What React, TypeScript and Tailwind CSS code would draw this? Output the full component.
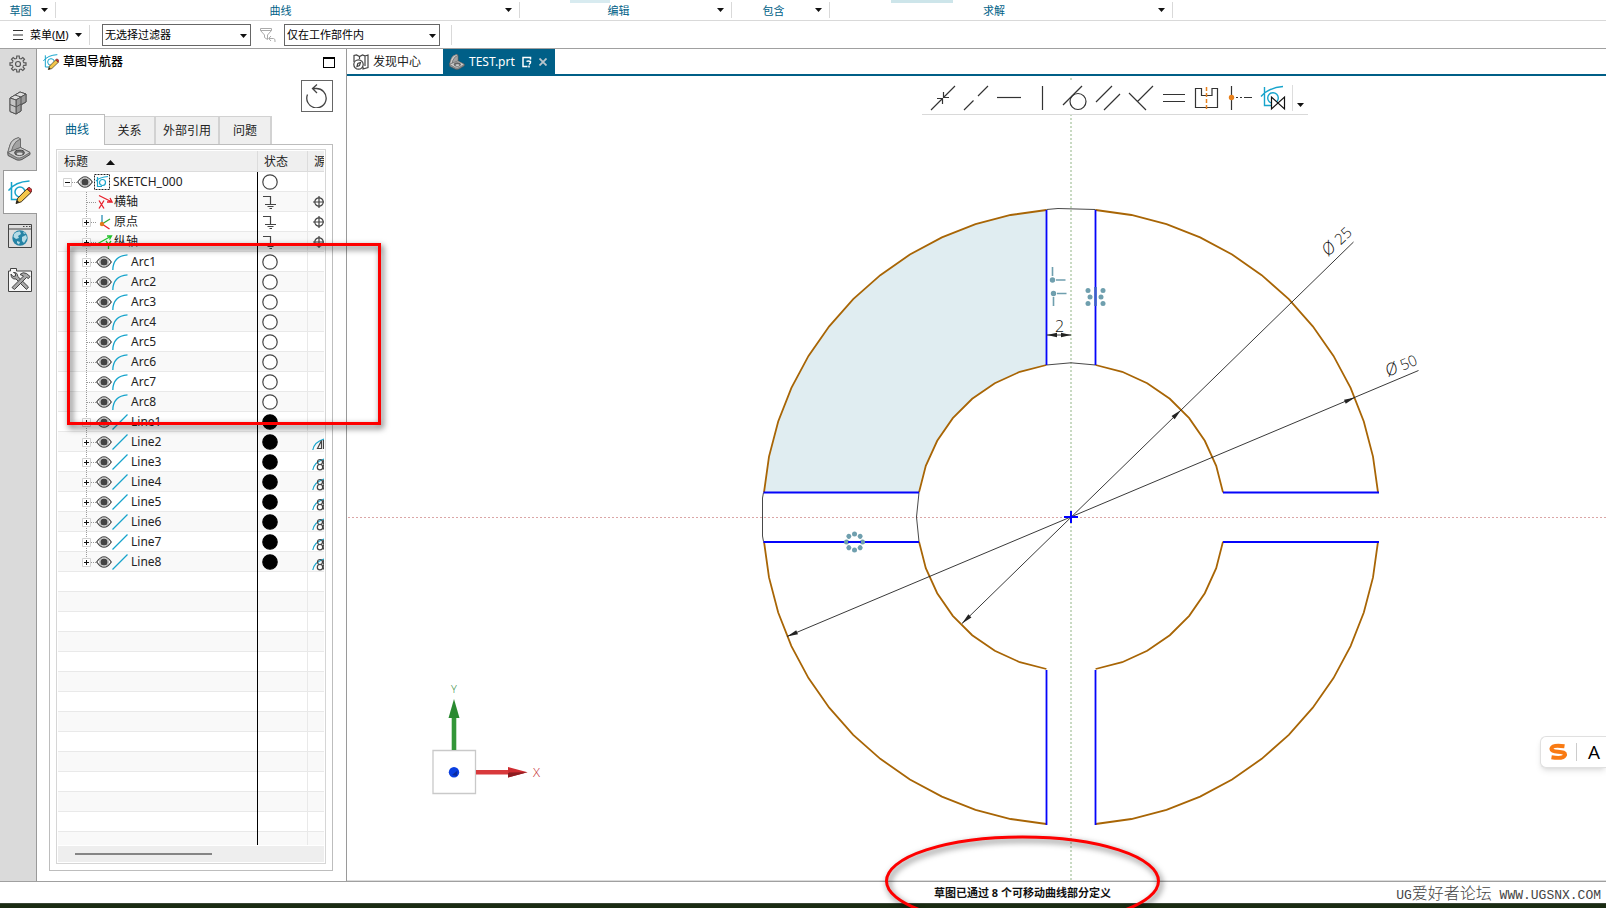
import React from "react";

const SANS = "font-['Noto_Sans','Noto_Sans_CJK_SC',sans-serif]";

/* ---------- small shared pieces ---------- */

function Caret({ className = "" }: { className?: string }) {
  return (
    <svg viewBox="0 0 7 4" className={"h-1 w-[7px] shrink-0 " + className} aria-hidden="true">
      <path d="M0 0H7L3.5 4Z" fill="#111" />
    </svg>
  );
}

function RibbonGroup({ label, className }: { label: string; className: string }) {
  return (
    <div className={"flex h-4 shrink-0 items-center border-r border-[#d9d9d9] pr-[7px] " + className}>
      <span className="flex-1 text-center">{label}</span>
      <button type="button" aria-label={label}>
        <Caret />
      </button>
    </div>
  );
}

function Picker({ value, className }: { value: string; className: string }) {
  return (
    <div className={"relative h-[22px] shrink-0 " + className}>
      <select
        aria-label={value}
        className="h-full w-full appearance-none border border-[#666] bg-white pl-[2px] text-[11px] leading-none text-black outline-none"
      >
        <option>{value}</option>
      </select>
      <Caret className="pointer-events-none absolute top-[10px] right-1" />
    </div>
  );
}

function SketchGlyph({ pencil = false, className = "" }: { pencil?: boolean; className?: string }) {
  return (
    <svg viewBox="0 0 24 24" className={className} fill="none" aria-hidden="true">
      <path d="M3.5 2V19.500H12M.5 10.500C5 4.500 12 1.500 21.500 1" stroke="#17a4cc" strokeWidth="1.500" />
      <circle cx="12" cy="12" r="5" stroke="#17a4cc" strokeWidth="1.500" />
      {pencil && (
        <>
          <path d="M8 23.500L9.700 18.200L19 8.800L23 12.500L13.300 21.800Z" fill="#f4c64a" stroke="#3a2d18" />
          <path d="M19 8.800L20.500 7.500Q22 7 23.500 9.200L23.800 11L23 12.500Z" fill="#d33" stroke="#5a1c1c" strokeWidth=".8" />
          <path d="M8 23.500L9 20L11.400 22.300Z" fill="#222" />
        </>
      )}
    </svg>
  );
}

function PartGlyph({ className = "" }: { className?: string }) {
  return (
    <svg viewBox="0 0 24 24" className={className} aria-hidden="true" strokeLinejoin="round">
      <path d="M.8 15.500L3 8Q5 2 11.500 .8L13.500 2V10.500L23 15.500V17.500L15 22.500Q13 23.500 10 23L1 18.500Z" fill="#9c9c9c" stroke="#555" />
      <path d="M.8 15.500L3 8Q5 2 11.500 .8L13.500 2Q8 4 6 9.500L4.500 14Z" fill="#c9c9c9" stroke="#666" strokeWidth=".7" />
      <path d="M4.500 14L6 9.500Q8 4 13.500 2V10.500Z" fill="#a2a2a2" stroke="#666" strokeWidth=".7" />
      <path d="M.8 15.500L13.500 10.500L23 15.500L15 20.300Q13 21.300 10 20.800Z" fill="#cfcfcf" stroke="#555" strokeWidth=".7" />
      <ellipse cx="12.500" cy="15.700" rx="4.800" ry="2.600" fill="#6d6d6d" stroke="#444" />
      <ellipse cx="12.700" cy="16.700" rx="3" ry="1.200" fill="#d5d5d5" />
    </svg>
  );
}

/* ---------- left resource bar ---------- */

function ResourceBar() {
  const teeth = [0, 45, 90, 135, 180, 225, 270, 315];
  return (
    <nav className="flex w-[37px] shrink-0 flex-col items-end border-r border-[#9a9a9a] bg-[#dadada]">
      <button type="button" aria-label="设置" className="flex h-[30px] w-9 items-center justify-center">
        <svg viewBox="0 0 18 18" className="size-[18px]" fill="none" stroke="#555" strokeWidth="1.200">
          <circle cx="9" cy="9" r="2.500" />
          {teeth.map((a) => (
            <path key={a} d="M6.800 3.600L7.600 3.200L7.800 1H10.200L10.400 3.200L11.200 3.600" transform={`rotate(${a} 9 9)`} />
          ))}
        </svg>
      </button>
      <button type="button" aria-label="装配" className="mt-2 flex h-8 w-9 items-center justify-center">
        <svg viewBox="0 0 18 24" className="h-6 w-[18px]" stroke="#555" strokeLinejoin="round">
          <path d="M1 7L11 1L17 3V11L12 14V20L7 23L1 20.500Z" fill="#aaa" />
          <path d="M1 7L11 1L17 3L7 9Z" fill="#ddd" />
          <path d="M7 9L17 3V11L12 13.500V20L7 23Z" fill="#999" />
          <path d="M1 7L7 9V23L1 20.500Z" fill="#c4c4c4" />
          <path d="M1 13.500L7 16L12 13M6 4L12 6V14" fill="none" />
        </svg>
      </button>
      <button type="button" aria-label="部件" className="mt-[14px] flex h-8 w-[34px] items-center justify-center">
        <PartGlyph className="size-6" />
      </button>
      <div className="mt-[5px] -mr-px flex h-11 w-[34px] items-center justify-center border border-r-0 border-[#9a9a9a] bg-white pr-[2px]">
        <button type="button" aria-label="草图导航器">
          <SketchGlyph pencil className="size-6" />
        </button>
      </div>
      <button type="button" aria-label="浏览器" className="mt-[10px] mr-1">
        <svg viewBox="0 0 24 24" className="size-6">
          <path d="M.5 .5H23.500V23.500H.5Z" fill="#dedede" stroke="#444" />
          <path d="M.5 5H23.500M15 2.500H16.500M18 2.500H19.500M21 2.500H22.500" stroke="#444" />
          <circle cx="12" cy="14" r="7.700" fill="#2583a5" />
          <path d="M6 10Q8 7 12 7.500L13 10L10 12L11 14L8 15L5.500 13ZM14 13L18 11L19 14L16 19L14 17ZM9 17L12 18L11 20.500L9 19ZM15 8L18 9L16 10Z" fill="#b5dbe6" />
        </svg>
      </button>
      <button type="button" aria-label="工具" className="mt-5 mr-1">
        <svg viewBox="0 0 24 24" className="size-6" strokeLinejoin="round">
          <path d="M.5 3H2.500V.5H8.500V3H23.500V23.500H.5Z" fill="#f7f7f7" stroke="#444" />
          <path d="M3 6L5 8.500L7.500 8L7.500 5.500L5.500 4.500Q9.500 4 9.800 8.500L20.500 19L18.500 21.500L8 11Q3 11.500 3 6Z" fill="#a9a9a9" stroke="#444" />
          <path d="M12 6.500Q15 3.500 18.500 5.500L22 8.500L20.500 10.500L18.500 9.500L6.500 21.500L4 19.500L15.500 8Z" fill="#a9a9a9" stroke="#444" />
        </svg>
      </button>
    </nav>
  );
}

/* ---------- navigator tree ---------- */

type Kind = "root" | "x" | "origin" | "y" | "arc" | "line";
type Node = { name: string; kind: Kind; expand?: "-" | "+"; source?: "fixed" | "mirror" | "pattern" };

const NODES: Node[] = [
  { name: "SKETCH_000", kind: "root", expand: "-" },
  { name: "横轴", kind: "x", source: "fixed" },
  { name: "原点", kind: "origin", expand: "+", source: "fixed" },
  { name: "纵轴", kind: "y", expand: "+", source: "fixed" },
  { name: "Arc1", kind: "arc", expand: "+" },
  { name: "Arc2", kind: "arc", expand: "+" },
  { name: "Arc3", kind: "arc" },
  { name: "Arc4", kind: "arc" },
  { name: "Arc5", kind: "arc" },
  { name: "Arc6", kind: "arc" },
  { name: "Arc7", kind: "arc" },
  { name: "Arc8", kind: "arc" },
  { name: "Line1", kind: "line", expand: "+" },
  { name: "Line2", kind: "line", expand: "+", source: "mirror" },
  { name: "Line3", kind: "line", expand: "+", source: "pattern" },
  { name: "Line4", kind: "line", expand: "+", source: "pattern" },
  { name: "Line5", kind: "line", expand: "+", source: "pattern" },
  { name: "Line6", kind: "line", expand: "+", source: "pattern" },
  { name: "Line7", kind: "line", expand: "+", source: "pattern" },
  { name: "Line8", kind: "line", expand: "+", source: "pattern" },
];
const BLANK_ROWS = 14;

function Eye() {
  return (
    <svg viewBox="0 0 16 12" className="h-3 w-4 shrink-0" fill="none">
      <path d="M.7 6Q8-4.500 15.300 6Q8 16.500 .7 6Z" fill="#fff" stroke="#444" strokeWidth="1.200" />
      <circle cx="8" cy="6" r="3.600" fill="#444" />
      <circle cx="8" cy="6" r="4.500" stroke="#777" strokeWidth=".5" />
    </svg>
  );
}

function Branch({ node, last }: { node: Node; last: boolean }) {
  const root = node.kind === "root";
  return (
    <svg viewBox="0 0 16 20" className="h-5 w-4 shrink-0" fill="none">
      {!root && <path d={last ? "M6.500 0V10" : "M6.500 0V20"} stroke="#999" strokeDasharray="1 1" />}
      <path d="M7 10.500H16" stroke="#999" strokeDasharray="1 1" />
      {node.expand && (
        <>
          <path d="M2.500 6.500H10.500V14.500H2.500Z" fill="#fff" stroke="#d2d2d2" />
          <path d={node.expand === "+" ? "M4 10.500H9M6.500 8V13" : "M4 10.500H9"} stroke="#111" />
        </>
      )}
    </svg>
  );
}

function KindIcon({ kind }: { kind: Kind }) {
  switch (kind) {
    case "root":
      return (
        <svg viewBox="0 0 16 16" className="size-4 shrink-0" fill="none">
          <path d="M.5 .5H15.500V15.500H.5Z" stroke="#222" strokeDasharray="2 1" />
          <path d="M3.500 3V12.500H8M2 7Q6 3 14 2.500" stroke="#17a4cc" strokeWidth="1.200" />
          <circle cx="8.500" cy="8.500" r="3" stroke="#17a4cc" strokeWidth="1.200" />
        </svg>
      );
    case "x":
      return (
        <svg viewBox="0 0 16 16" className="size-4 shrink-0" fill="none" stroke="#e8202c">
          <path d="M2 1.500L15 8M10 8L15 8L13 4" strokeWidth="1.300" />
          <path d="M2 6.500L7 14.500M7 6.500L2 14.500" strokeWidth="1.300" />
        </svg>
      );
    case "origin":
      return (
        <svg viewBox="0 0 16 16" className="size-4 shrink-0" fill="none" strokeWidth="1.300">
          <path d="M5 10V1" stroke="#2a8fb5" />
          <path d="M5 10L13 5" stroke="#35a835" />
          <path d="M5 10L12.500 15" stroke="#e8202c" />
          <circle cx="5" cy="10" r="2.200" fill="#e07b1d" />
        </svg>
      );
    case "y":
      return (
        <svg viewBox="0 0 16 16" className="size-4 shrink-0" fill="none" stroke="#22c32a" strokeWidth="1.300">
          <path d="M1 9.500L14.500 2M10 2L14.500 2L12.500 5.500" />
          <path d="M9 7L11.500 10.500L14 7M11.500 10.500V15" />
        </svg>
      );
    case "arc":
      return (
        <svg viewBox="0 0 16 16" className="size-4 shrink-0" fill="none">
          <path d="M.8 16Q1 2 15.500 .8" stroke="#17a4cc" strokeWidth="1.300" />
        </svg>
      );
    case "line":
      return (
        <svg viewBox="0 0 16 16" className="size-4 shrink-0" fill="none">
          <path d="M.5 15.500L15.500 .5" stroke="#17a4cc" strokeWidth="1.300" />
        </svg>
      );
  }
}

function StateIcon({ kind }: { kind: Kind }) {
  const fixed = kind === "x" || kind === "y" || kind === "origin";
  return (
    <svg viewBox="0 0 16 16" className="size-4" fill="none">
      {fixed ? (
        <path d="M1 2.500H8.500V10M3 10.500H14M5.500 12.500H11.500M7.500 14.500H10" stroke="#444" strokeWidth="1.200" />
      ) : (
        <circle cx="8" cy="8" r="7.200" fill={kind === "line" ? "#000" : "#fff"} stroke={kind === "line" ? "#000" : "#444"} strokeWidth="1.200" />
      )}
    </svg>
  );
}

function SourceIcon({ source }: { source: NonNullable<Node["source"]> }) {
  if (source === "fixed")
    return (
      <svg viewBox="0 0 11 14" className="ml-[5px] h-[14px] w-[11px]" fill="none" stroke="#444" strokeWidth="1.200">
        <circle cx="6" cy="7" r="4.200" />
        <path d="M0 7H11M6 1V13" />
      </svg>
    );
  return (
    <svg viewBox="0 0 12 14" className="mt-1 ml-1 h-[14px] w-3" fill="none">
      <path d="M.8 13Q2 5 12 2" stroke="#17a4cc" strokeWidth="1.200" />
      {source === "mirror" ? (
        <path d="M5.500 11.500L9.500 3.500V11.500ZM11.500 3V12" stroke="#444" strokeWidth="1.200" />
      ) : (
        <>
          <circle cx="8" cy="5" r="2.500" stroke="#444" strokeWidth="1.200" />
          <circle cx="8" cy="10.200" r="2.700" stroke="#444" strokeWidth="1.200" />
          <path d="M12 3Q10.500 5 12 7.500Q10.300 10 12 12.500" stroke="#444" strokeWidth="1.200" />
        </>
      )}
    </svg>
  );
}

function TreeRow({ node, index }: { node?: Node; index: number }) {
  const line = "border-b border-[#e9e9e9] p-0";
  const axis = node && (node.kind === "x" || node.kind === "y" || node.kind === "origin");
  return (
    <tr className={index % 2 ? "h-5 bg-[#f9f9f9]" : "h-5 bg-white"}>
      <td className={line}>
        {node && (
          <div className={node.kind === "root" ? "flex h-[19px] items-center pl-[3px]" : "flex h-[19px] items-center pl-[22px]"}>
            <Branch node={node} last={index === NODES.length - 1} />
            {!axis && <Eye />}
            <span className={axis ? "ml-px flex" : node.kind === "root" ? "ml-px flex" : "flex"}>
              <KindIcon kind={node.kind} />
            </span>
            <span className={axis ? "ml-px" : "ml-[3px]"}>{node.name}</span>
          </div>
        )}
      </td>
      <td className="bg-black p-0" />
      <td className={line + " border-r border-r-[#e9e9e9] pl-1"}>
        {node && <StateIcon kind={node.kind} />}
      </td>
      <td className={line + " overflow-hidden"}>{node?.source && <SourceIcon source={node.source} />}</td>
    </tr>
  );
}

function Navigator() {
  const rows: (Node | undefined)[] = [...NODES, ...Array(BLANK_ROWS).fill(undefined)];
  const tab = "h-7 border-t border-r-2 border-[#d2d2d2] bg-[#efefef] text-center";
  return (
    <aside className="flex w-[310px] shrink-0 flex-col border-r border-[#9a9a9a] bg-white pr-[13px] pb-[10px] pl-3 text-xs leading-none text-[#222]">
      <header className="-mx-2 flex h-[26px] shrink-0 items-center pl-[2px]">
        <SketchGlyph pencil className="size-4" />
        <h2 className="ml-1 flex-1 font-medium text-black">草图导航器</h2>
        <button type="button" aria-label="最大化" className="mr-[6px] h-[11px] w-3 border border-t-2 border-black" />
      </header>
      <button
        type="button"
        aria-label="重置"
        className="mt-[5px] flex size-8 shrink-0 items-center justify-center self-end border border-[#666]"
      >
        <svg viewBox="0 0 24 24" className="size-6" fill="none" stroke="#444" strokeWidth="1.300">
          <path d="M2.500 10.500A9.700 9.700 0 1 0 11 4.500H7.500M12 .5L7.500 4.500L12 9" />
        </svg>
      </button>
      <div className="mt-[2px] flex shrink-0 items-end" role="tablist">
        <button type="button" role="tab" aria-selected="true" className="relative z-10 -mb-px h-[31px] w-14 border border-b-0 border-[#bdbdbd] bg-white text-[#005f87]">
          曲线
        </button>
        <button type="button" role="tab" className={tab + " w-[51px]"}>关系</button>
        <button type="button" role="tab" className={tab + " w-16"}>外部引用</button>
        <button type="button" role="tab" className={tab + " w-[52px]"}>问题</button>
      </div>
      <div className="flex min-h-0 flex-1 flex-col border border-[#bdbdbd] px-[6px] pt-1 pb-[6px]">
        <div className="flex min-h-0 flex-1 flex-col border border-[#d6d6d6] p-px">
          <div className="min-h-0 flex-1 overflow-hidden">
            <table className="w-full table-fixed border-separate border-spacing-0">
              <thead>
                <tr className="h-[21px] bg-[#efefef] text-left">
                  <th className="w-[199px] border-b border-[#dcdcdc] p-0 pt-px pl-[6px] font-normal">
                    <span className="flex items-center gap-[18px]">
                      标题
                      <svg viewBox="0 0 9 5" className="mt-px h-[5px] w-[9px]">
                        <path d="M0 5H9L4.500 0Z" fill="#111" />
                      </svg>
                    </span>
                  </th>
                  <th className="w-px bg-[#dcdcdc] p-0" />
                  <th className="w-[50px] border-r border-b border-[#dcdcdc] p-0 pt-px pl-[6px] font-normal">状态</th>
                  <th className="overflow-hidden border-b border-[#dcdcdc] p-0 pt-px pl-[6px] font-normal whitespace-nowrap">源</th>
                </tr>
              </thead>
              <tbody>
                {rows.map((n, i) => (
                  <TreeRow key={i} node={n} index={i} />
                ))}
              </tbody>
            </table>
          </div>
          <div className="mt-px flex h-4 shrink-0 items-center bg-[#eee] pl-[17px]">
            <div className="h-[2px] w-[137px] bg-[#858585]" />
          </div>
        </div>
      </div>
    </aside>
  );
}

/* ---------- graphics area ---------- */

const CX = 1071;
const CY = 517;
const R_OUT = 308;
const R_IN = 154;
const SLOT = 24.6;

function arcPoints(r: number, quadrant: number, steps: number): [number, number][] {
  const start = Math.asin(SLOT / r);
  const sweep = Math.PI / 2 - 2 * start;
  return Array.from({ length: steps + 1 }, (_, i) => {
    const a = (quadrant * Math.PI) / 2 + start + (sweep * i) / steps;
    return [CX + r * Math.sin(a), CY - r * Math.cos(a)];
  });
}
const toPath = (p: [number, number][]) => "M" + p.map(([x, y]) => `${x.toFixed(1)} ${y.toFixed(1)}`).join("L");

function Arrow({ x, y, angle, length = 11 }: { x: number; y: number; angle: number; length?: number }) {
  return <path d={`M0 0L${-length} -2.200V2.200Z`} fill="#222" transform={`translate(${x} ${y}) rotate(${angle})`} />;
}

function Drawing() {
  const quads = [0, 1, 2, 3];
  const dots = [0, 45, 90, 135, 180, 225, 270, 315];
  const fill = toPath([...arcPoints(R_OUT, 3, 12), ...arcPoints(R_IN, 3, 7).reverse()]) + "Z";
  const label = "font-['Open_Sans',sans-serif] font-light";
  return (
    <svg className="absolute inset-0 h-full w-full" fill="none">
      <g transform="translate(-347 -76)">
        <path d="M348 517.500H2600" stroke="#dba6a6" strokeDasharray="2 2" />
        <path d="M1071 78V880" stroke="#c8dac2" strokeWidth="2" strokeDasharray="2 2" />
        <path d={fill} fill="#e0edf1" />
        <path
          d="M1046.400 209.500L1058 208.500L1095.600 209.500M1046.400 365L1071 362.800L1095.600 365M763.500 492.500L762.500 498V536L763.500 541.600M919 492.500L916.500 517L919 541.600"
          stroke="#333"
          strokeWidth=".9"
        />
        <g stroke="#a86505" strokeWidth="1.800">
          {quads.map((q) => (
            <path key={q} d={toPath(arcPoints(R_OUT, q, 12)) + toPath(arcPoints(R_IN, q, 7))} />
          ))}
        </g>
        <path
          d="M1046.500 210V365M1095.500 210V365M1046.500 670V825M1095.500 670V825M763.500 492.500H919M763.500 542H919M1223 492.500H1379M1223 542H1379"
          stroke="#0505fa"
          strokeWidth="1.800"
        />
        <path d="M1353.500 242L962 623.500M1418.500 370.500L787 636.500M1047 335H1071" stroke="#222" strokeWidth=".9" />
        <Arrow x={1181} y={410} angle={-44} />
        <Arrow x={962} y={623.5} angle={136} />
        <Arrow x={1355} y={397.5} angle={-23} />
        <Arrow x={787} y={636.5} angle={157} />
        <Arrow x={1047} y={335} angle={180} length={10} />
        <Arrow x={1071} y={335} angle={0} length={10} />
        <path d="M1064 517H1078" stroke="#00f" strokeWidth="2" />
        <path d="M1071 511V523" stroke="#00f" strokeWidth="2" />

        <g fill="#111">
          <g transform="translate(1328 257) rotate(-43)" className={label}>
            <text fontSize="17" className="italic">Ø</text>
            <text x="17" y="0" fontSize="15">25</text>
          </g>
          <g transform="translate(1388 377) rotate(-23)" className={label}>
            <text fontSize="17" className="italic">Ø</text>
            <text x="16" y="0" fontSize="15">50</text>
          </g>
          <text x="1055" y="332" fontSize="16" className={label}>2</text>
        </g>

        <g stroke="#6f9fae" strokeWidth="1.600">
          <path d="M1052.500 267V276M1056 280H1065.500M1057 293.500H1066.500M1053.500 297V306" />
        </g>
        <g fill="#6f9fae">
          <circle cx="1052.500" cy="280" r="2.700" />
          <circle cx="1053.500" cy="293.500" r="2.700" />
          <circle cx="1088" cy="290.500" r="2.500" />
          <circle cx="1090" cy="297" r="2.500" />
          <circle cx="1088" cy="303.500" r="2.500" />
          <circle cx="1103" cy="290.500" r="2.500" />
          <circle cx="1101" cy="297" r="2.500" />
          <circle cx="1103" cy="303.500" r="2.500" />
          {dots.map((a) => (
            <circle key={a} cx="854.500" cy="534" r="2.500" transform={`rotate(${a} 854.500 542)`} />
          ))}
        </g>
        <path d="M848 542H861" stroke="#0505fa" strokeWidth="1.800" />
        <path d="M1095.500 287V306" stroke="#3d60c8" strokeWidth="2.500" />

        <path d="M433 750.500H475.500V793.500H433Z" fill="#fff" stroke="#c9c9c9" strokeWidth="1.300" />
        <path d="M451.700 718H456.300V750H451.700Z" fill="#339638" />
        <path d="M454 699L459.500 718H448.500Z" fill="#2a8a30" />
        <path d="M476 770H508V774.500H476Z" fill="#d8393c" />
        <path d="M527.500 772.300L508 777.500V767Z" fill="#cf2c30" />
        <path d="M527.500 772.300L508 777.500V772.500Z" fill="#8c1c20" />
        <circle cx="454" cy="772.300" r="5.200" fill="#0a3fe0" />
        <path d="M452 775L457.500 770.500L457 776Z" fill="#0a2a9c" />
        <text x="454" y="693" textAnchor="middle" fontSize="11" fill="#2f8a35" className={label}>Y</text>
        <text x="536.500" y="777" textAnchor="middle" fontSize="13" fill="#c4282c" className={label}>X</text>
      </g>
    </svg>
  );
}

const TOOLS: { name: string; art: React.ReactNode }[] = [
  { name: "重合", art: <path d="M0 24L11.500 12.500M12.500 11.500L24 0M6 12.500H11.500V18M18 11.500H12.500V6" /> },
  { name: "共线", art: <path d="M0 24L9.500 14.500M14 10L24 0" /> },
  { name: "水平", art: <path d="M0 11.500H24" /> },
  { name: "竖直", art: <path d="M12.500 0V24" /> },
  {
    name: "相切",
    art: (
      <>
        <path d="M0 19L19 0" />
        <circle cx="15" cy="15.500" r="8" />
      </>
    ),
  },
  { name: "平行", art: <path d="M0 16L16 0M8 24L24 8" /> },
  { name: "垂直", art: <path d="M0 7L8.500 15.500L17 24M8.500 15.500L24 0" /> },
  { name: "等长", art: <path d="M1 8.500H23M1 15.500H23" /> },
  {
    name: "对称",
    art: (
      <>
        <path d="M.5 2.500H6.500V9.500H17V2.500H22.500V21.500H.5Z" />
        <path d="M11.500 1V23" stroke="#e8811c" strokeWidth="1.500" strokeDasharray="4 2" />
      </>
    ),
  },
  {
    name: "中点",
    art: (
      <>
        <path d="M3.500 0V24M8 11.500H10M12 11.500H14M16 11.500H24" />
        <circle cx="3.500" cy="11.500" r="2.700" fill="#e8811c" stroke="none" />
      </>
    ),
  },
  {
    name: "松弛关系",
    art: (
      <>
        <g stroke="#17a4cc" strokeWidth="1.400">
          <path d="M3.500 1V19.500H11M0 10.500Q8 1.500 22 .5" />
          <circle cx="12" cy="12" r="5.300" />
        </g>
        <path d="M10.500 11V23L23.500 11V23Z" stroke="#111" fill="#fff" />
      </>
    ),
  },
];

function ConstraintBar() {
  return (
    <div className="absolute top-1 left-[575px] flex h-[35px] items-center border-b border-[#d9d9d9] bg-white pt-px pl-[9px]">
      <div className="flex gap-[9px]">
        {TOOLS.map((t) => (
          <button key={t.name} type="button" aria-label={t.name} className="size-6 shrink-0">
            <svg viewBox="0 0 24 24" className="size-6 overflow-visible" fill="none" stroke="#333" strokeWidth="1.200">
              {t.art}
            </svg>
          </button>
        ))}
      </div>
      <button type="button" aria-label="更多" className="ml-[7px] flex h-[26px] w-4 items-end border-l border-[#ddd] pb-1 pl-1">
        <Caret />
      </button>
    </div>
  );
}

function Viewport() {
  return (
    <section className="flex min-w-0 flex-1 flex-col">
      <div className="flex h-[27px] shrink-0 items-stretch border-b-2 border-[#005f87] text-xs">
        <button type="button" className="flex w-24 items-center gap-1 pl-[6px] text-[#222]">
          <svg viewBox="0 0 16 16" className="size-4" fill="none" stroke="#444" strokeWidth="1.200">
            <path d="M1 8V1.500L3.500 1L6.500 2.500L9.500 1L12 2V12M12 2L15 1V13.500L10 15V13M6.500 2.500V5" />
            <circle cx="5.500" cy="10.500" r="4.700" fill="#fff" />
            <path d="M4 12.500L4.800 9.500L7.500 8.500L6.500 11.500Z" />
          </svg>
          发现中心
        </button>
        <div className="flex w-[112px] items-center bg-[#005f87] pl-[6px] text-white">
          <PartGlyph className="size-4" />
          <button type="button" className="ml-1">TEST.prt</button>
          <svg viewBox="0 0 10 12" className="ml-[7px] h-3 w-[10px]" fill="none" stroke="#fff" strokeWidth="1.500">
            <path d="M8.500 3.500V1.500H1V10.500H5.500M1 1.500H8" />
            <path d="M4.500 5.500Q6 4.500 8.500 5.500Q9 7 7 8.500M7 9.500V11.500" />
          </svg>
          <button type="button" aria-label="关闭" className="ml-[7px]">
            <svg viewBox="0 0 8 8" className="size-2" stroke="#b9c6cc" strokeWidth="1.800">
              <path d="M.5 .5L7.500 7.500M7.500 .5L.5 7.500" />
            </svg>
          </button>
        </div>
      </div>
      <div className="relative min-h-0 flex-1 overflow-hidden border-b border-[#dcdcdc] bg-white">
        <Drawing />
        <ConstraintBar />
        <div className="absolute right-0 bottom-[112px] flex h-8 w-[66px] items-center rounded-l-md border border-r-0 border-[#e0e0e0] bg-white pl-[7px] shadow-md">
          <svg viewBox="0 0 20 18" className="h-[18px] w-5 shrink-0">
            <path d="M16.500 3.300Q4.500 1.500 3.500 5.500Q3 8.500 10 8.700Q17.500 9 17 12Q15.500 16.200 3.500 14.300" fill="none" stroke="#f97a12" strokeWidth="4" />
          </svg>
          <span className="ml-2 h-[18px] w-px shrink-0 bg-[#ccc]" />
          <span className="ml-[11px] font-['Open_Sans',sans-serif] text-[19px] leading-none text-black">A</span>
        </div>
      </div>
    </section>
  );
}

/* ---------- page ---------- */

export default function App() {
  return (
    <div className={"relative flex h-screen flex-col overflow-hidden bg-white " + SANS}>
      <div className="relative flex h-[21px] shrink-0 items-start border-b border-[#d9d9d9] text-[11px] leading-none text-[#005f87]">
        <span className="absolute top-0 left-[570px] h-[3px] w-10 bg-[#d8ebf0]" />
        <span className="absolute top-0 left-[891px] h-[3px] w-[62px] bg-[#cde5ea]" />
        <div className="flex pt-[2px]">
          <RibbonGroup label="草图" className="w-14" />
          <RibbonGroup label="曲线" className="w-[464px]" />
          <RibbonGroup label="编辑" className="w-[212px]" />
          <RibbonGroup label="包含" className="w-[98px]" />
          <RibbonGroup label="求解" className="w-[343px]" />
        </div>
      </div>

      <div className="flex h-7 shrink-0 items-center border-b border-[#a0a0a0] text-[11px] leading-none text-black">
        <button type="button" className="flex h-5 w-[90px] shrink-0 items-center border-r border-[#d9d9d9] pl-[13px]">
          <svg viewBox="0 0 10 10" className="mr-[7px] size-[10px]" stroke="#333">
            <path d="M0 .5H10M0 5H10M0 9.500H10" />
          </svg>
          <span>
            菜单(<u>M</u>)
          </span>
          <Caret className="ml-[6px]" />
        </button>
        <Picker value="无选择过滤器" className="ml-3 w-[149px]" />
        <svg viewBox="0 0 16 16" className="mr-2 ml-[9px] size-4 shrink-0" fill="none" stroke="#aaa">
          <path d="M.5 1.500H11.500V3.500L7.500 8V12.500L4.500 10.500V8L.5 3.500ZM.5 3.500H11.500" />
          <path d="M9 11.500H13.500Q15.500 11.500 15 15M11 9L8.700 11.500L11 14" />
        </svg>
        <Picker value="仅在工作部件内" className="w-[156px]" />
        <span className="ml-[11px] h-5 w-px bg-[#d9d9d9]" />
      </div>

      <main className="flex min-h-0 flex-1 border-b border-[#a0a0a0]">
        <ResourceBar />
        <Navigator />
        <Viewport />
      </main>

      <footer className="relative flex h-[21px] shrink-0 items-end justify-end pr-[5px]">
        <p className="absolute top-[5px] left-[934px] text-[11px] leading-none font-bold whitespace-nowrap text-[#111]">
          草图已通过 8 个可移动曲线部分定义
        </p>
        <p className="font-['Liberation_Mono','Noto_Sans_CJK_SC',monospace] text-[13px] leading-none whitespace-nowrap text-[#444]">
          UG<span className="text-base leading-none font-light">爱好者论坛</span> WWW.UGSNX.COM
        </p>
      </footer>
      <div className="h-[5px] shrink-0 border-t border-[#3a4636] bg-[#1a2b12]" />

      <div className="pointer-events-none absolute top-[243px] left-[67px] h-[182px] w-[314px] border-3 border-[#fe0000] [filter:drop-shadow(2px_3px_3px_rgba(0,0,0,0.7))]" />
      <svg className="pointer-events-none absolute bottom-0 left-[880px] h-[80px] w-[290px] [filter:drop-shadow(2px_3px_3px_rgba(0,0,0,0.6))]" fill="none">
        <ellipse cx="142.500" cy="53" rx="136" ry="44" stroke="#fe0000" strokeWidth="3" />
      </svg>
    </div>
  );
}
